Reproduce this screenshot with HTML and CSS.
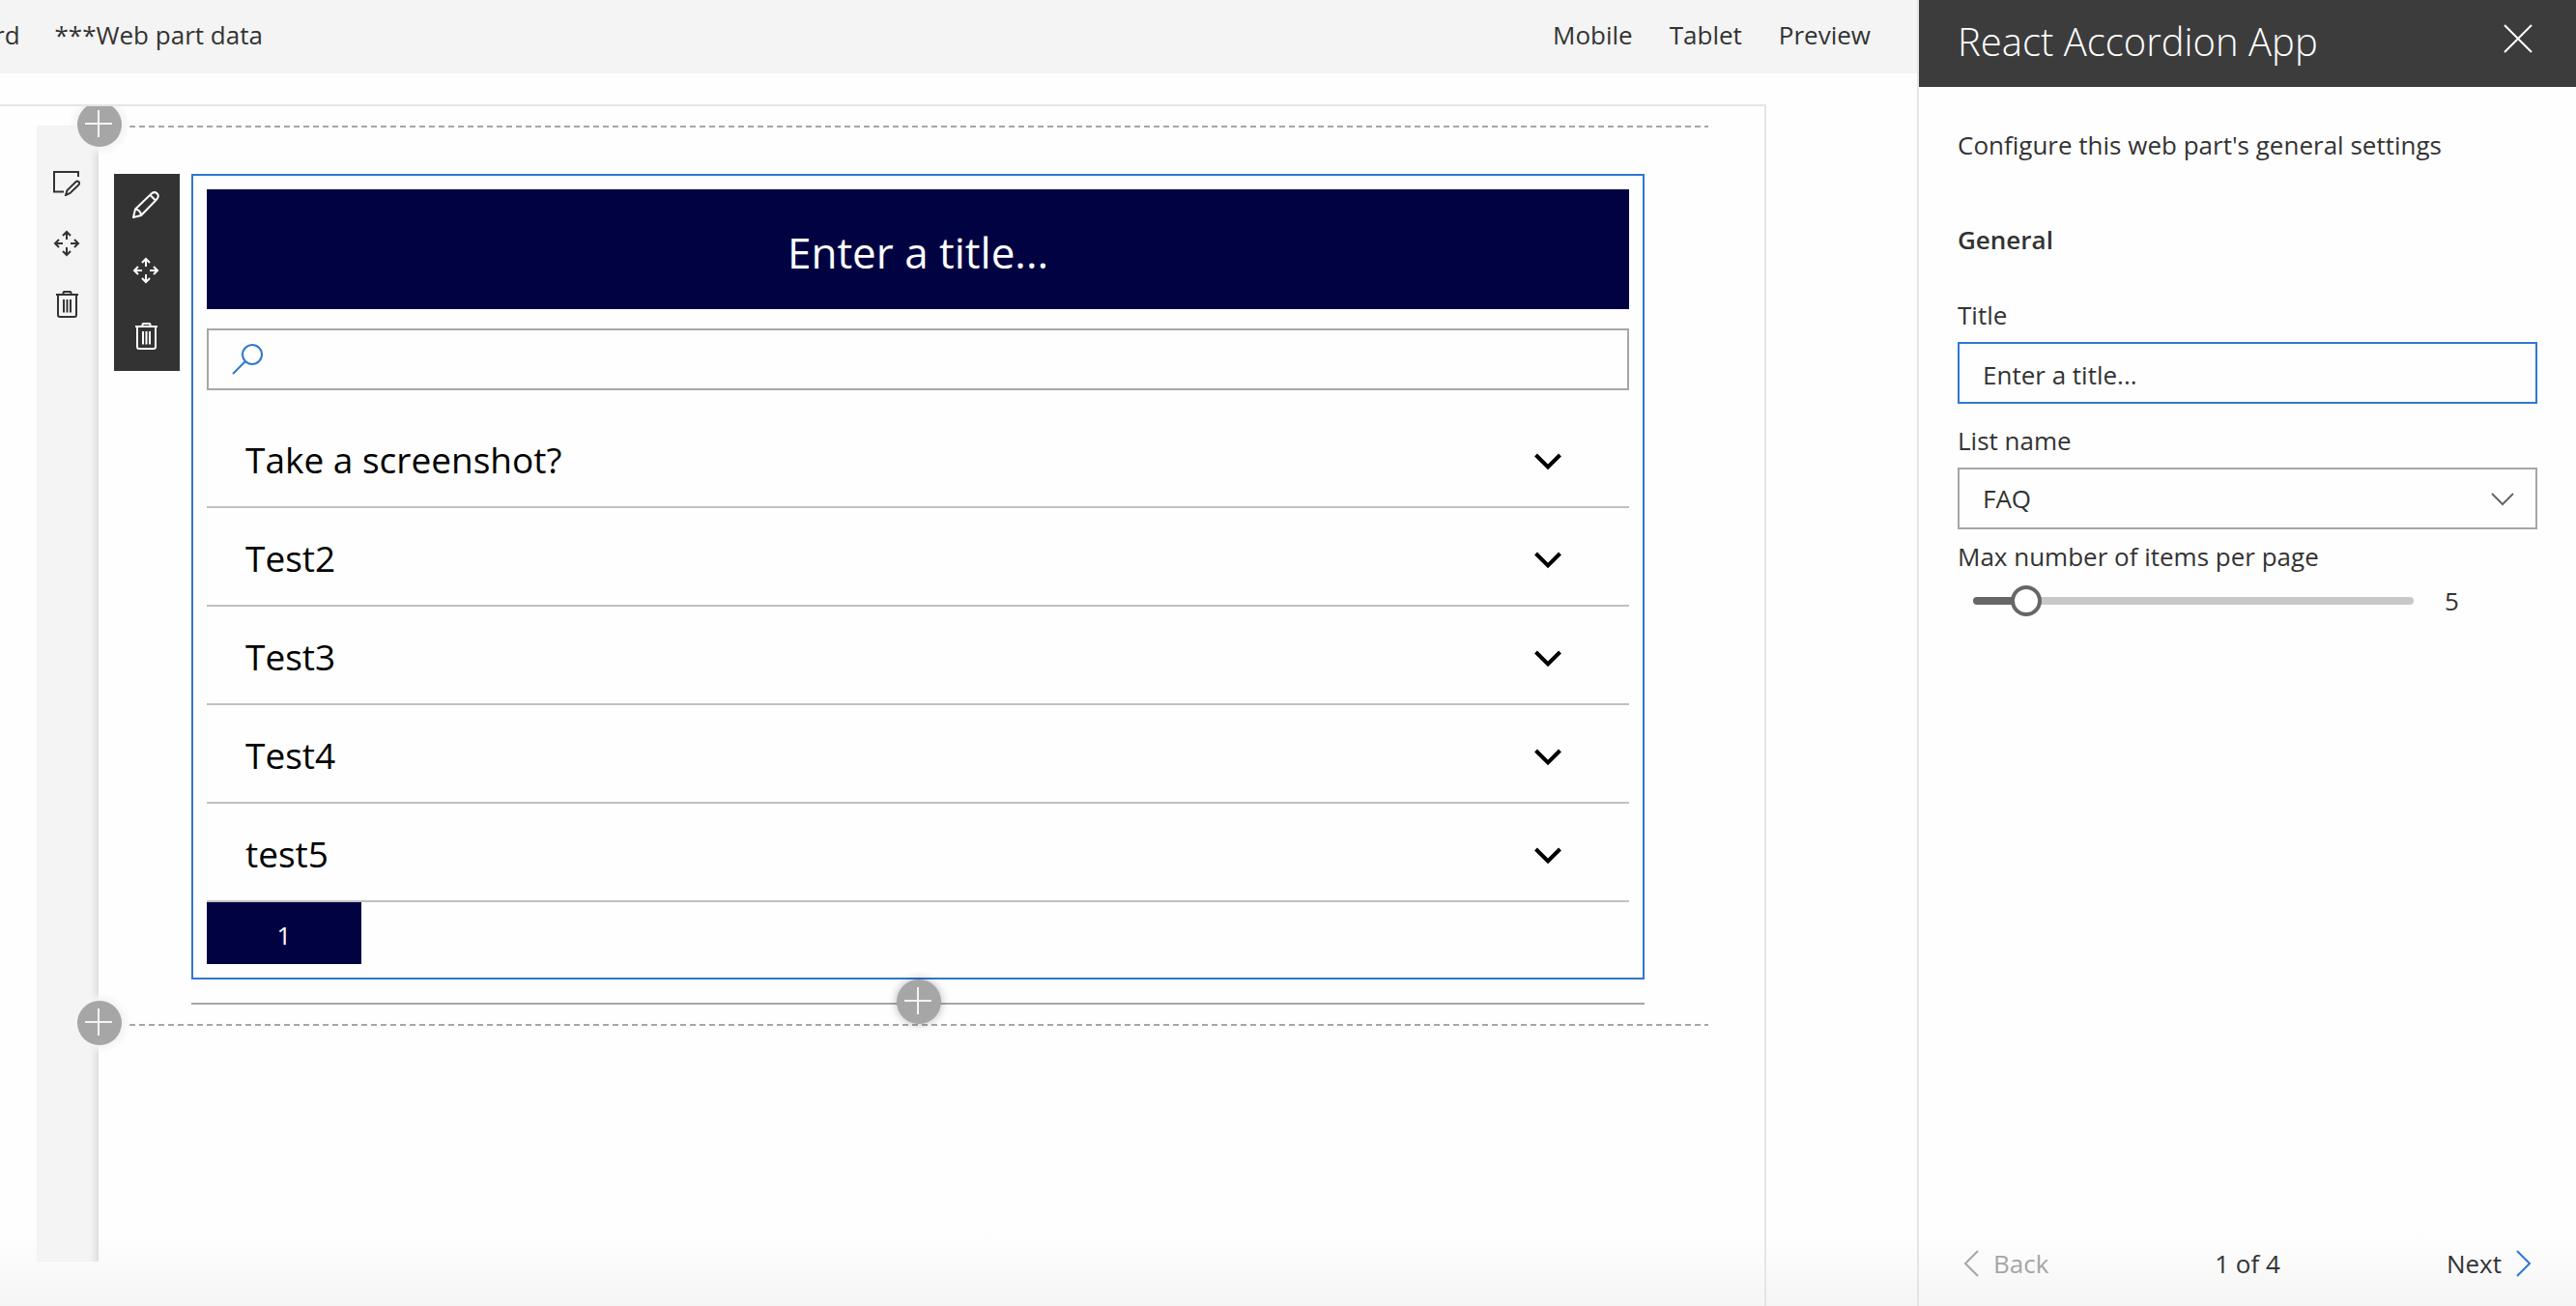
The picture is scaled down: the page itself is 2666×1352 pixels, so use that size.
FILE: index.html
```html
<!DOCTYPE html>
<html lang="en">
<head>
<meta charset="utf-8">
<title>React Accordion App</title>
<link rel="stylesheet" href="styles.css">
</head>
<body>
<svg class="defs" aria-hidden="true">
  <symbol id="i-move" viewBox="0 0 28 28">
    <path d="M14 2v8M14 18v8M2 14h8M18 14h8M10 6l4-4 4 4M10 22l4 4 4-4M6 10l-4 4 4 4M22 10l4 4-4 4"/>
  </symbol>
  <symbol id="i-trash" viewBox="0 0 28 28">
    <path d="M3 4h23M5 4v21q0 2 2 2h15q2 0 2-2V4M10.500 4V2q0-1 1-1h6q1 0 1 1v2M11 9v13.500M14.500 9v13.500M18 9v13.500"/>
  </symbol>
  <symbol id="i-down" viewBox="0 0 28 18">
    <path d="M1.500 2L14 14.500L26.500 2"/>
  </symbol>
</svg>
<div class="page">
  <main class="workspace">
    <header class="topbar">
      <nav class="links">
        <a href="#">rd</a>
        <a href="#">***Web part data</a>
      </nav>
      <nav class="links views">
        <a href="#">Mobile</a>
        <a href="#">Tablet</a>
        <a href="#">Preview</a>
      </nav>
    </header>
    <div class="canvas">
      <div class="section-tools">
        <button type="button" aria-label="Edit section"><svg class="icon" viewBox="0 0 28 28"><path d="M11 23.500H1V3H26V8M13 27l1.500-5L23.500 13.200q1.500-1.200 3 0t0 3L17.500 25z"/></svg></button>
        <button type="button" aria-label="Move section"><svg class="icon"><use href="#i-move"/></svg></button>
        <button type="button" aria-label="Delete section"><svg class="icon"><use href="#i-trash"/></svg></button>
      </div>
      <div class="section">
        <button type="button" class="add add-top" aria-label="Add section above"></button>
        <button type="button" class="add add-bottom" aria-label="Add section below"></button>
        <div class="part-row">
          <div class="part-tools">
            <button type="button" aria-label="Edit web part"><svg class="icon" viewBox="0 0 28 28"><path d="M1 27l2-8.500L20 2.300q3-2.300 5.500 0t0 5.700L9 25zM18.500 4l5.500 5.500M3 18.500q5 .5 6 6"/></svg></button>
            <button type="button" aria-label="Move web part"><svg class="icon"><use href="#i-move"/></svg></button>
            <button type="button" aria-label="Delete web part"><svg class="icon"><use href="#i-trash"/></svg></button>
          </div>
          <div class="part">
            <h1 class="part-title">Enter a title...</h1>
            <label class="search">
              <svg viewBox="0 0 32 32" aria-hidden="true"><circle cx="21" cy="11" r="10"/><path d="M14 18L1 31"/></svg>
              <input type="search" aria-label="Search">
            </label>
            <div class="accordion">
              <button type="button"><span>Take a screenshot?</span><svg><use href="#i-down"/></svg></button>
              <button type="button"><span>Test2</span><svg><use href="#i-down"/></svg></button>
              <button type="button"><span>Test3</span><svg><use href="#i-down"/></svg></button>
              <button type="button"><span>Test4</span><svg><use href="#i-down"/></svg></button>
              <button type="button"><span>test5</span><svg><use href="#i-down"/></svg></button>
            </div>
            <button type="button" class="pager">1</button>
          </div>
        </div>
        <div class="insert"><button type="button" class="add add-part" aria-label="Add web part"></button></div>
      </div>
    </div>
  </main>
  <aside class="panel">
    <header class="panel-head">
      <h2>React Accordion App</h2>
      <button type="button" aria-label="Close"><svg viewBox="0 0 30 30"><path d="M1 1L29 29M29 1L1 29"/></svg></button>
    </header>
    <form class="panel-body">
      <p>Configure this web part's general settings</p>
      <h3>General</h3>
      <label for="title">Title</label>
      <input id="title" class="box box-active" type="text" value="Enter a title...">
      <label for="list" class="next-field">List name</label>
      <div class="select">
        <select id="list" class="box"><option>FAQ</option></select>
        <svg viewBox="0 0 24 14" aria-hidden="true"><path d="M1 1L12 12L23 1"/></svg>
      </div>
      <label for="max" class="max-label">Max number of items per page</label>
      <div class="slider">
        <input id="max" type="range" min="1" max="45" value="5">
        <output for="max">5</output>
      </div>
    </form>
    <footer class="panel-foot">
      <button type="button" class="back" disabled><svg viewBox="0 0 16 28"><path d="M15 1L2 14L15 27"/></svg>Back</button>
      <span>1 of 4</span>
      <button type="button" class="next">Next<svg viewBox="0 0 16 28"><path d="M1 1L14 14L1 27"/></svg></button>
    </footer>
  </aside>
</div>
</body>
</html>
```

FILE: styles.css
```css
* { box-sizing: border-box; }

body {
  margin: 0;
  background: linear-gradient(to top, #f5f5f5, #fefefe 76px) #fefefe;
  color: #333;
  font: 26px/36px "Open Sans", "Noto Sans", sans-serif;
}

button, input, select { font: inherit; color: inherit; }

button {
  padding: 0;
  border: 0;
  background: none;
}

h1, h2, h3, p { margin: 0; }
svg { fill: none; stroke: currentColor; stroke-width: 2; display: block; }
.defs { width: 0; height: 0; position: absolute; }

.page { display: flex; min-height: 100vh; }

.workspace {
  flex: 1;
  min-width: 0;
  display: flex;
  flex-direction: column;
}

/* Top command bar */
.topbar {
  display: flex;
  justify-content: space-between;
  height: 76px;
  padding: 18px 48px 0 0;
  background: #f4f4f4;
  overflow: hidden;
}
.links { display: flex; gap: 36px; margin-left: -6px; }
.links a { color: inherit; text-decoration: none; white-space: nowrap; }
.views { gap: 38px; }

/* Editing canvas */
.canvas {
  flex: 1;
  display: flex;
  margin: 32px 156px 0 0;
  padding: 20px 58px 46px 38px;
  border: solid #e5e5e5;
  border-width: 2px 2px 0 0;
  overflow: hidden;
}

.section-tools {
  flex: none;
  width: 64px;
  padding-top: 27px;
  background: #f4f4f4;
  box-shadow: inset -8px 0 8px -6px #d4d4d4;
}
.section-tools button {
  display: grid;
  place-items: center;
  width: 62px;
  height: 63px;
}

.icon { width: 28px; height: 28px; }

.section {
  flex: 1;
  align-self: flex-start;
  position: relative;
  height: 932px;
  padding: 50px 66px 0 16px;
}
.section::before, .section::after {
  content: "";
  position: absolute;
  left: 32px;
  right: 0;
  height: 2px;
  background: repeating-linear-gradient(to right, #a6a6a6 0 6px, transparent 6px 10px);
}
.section::before { top: 0; }
.section::after { bottom: 0; }

.add {
  position: absolute;
  z-index: 1;
  width: 46px;
  height: 46px;
  border-radius: 50%;
  background:
    linear-gradient(#f4f4f4, #f4f4f4) 21px 8px / 2px 28px no-repeat,
    linear-gradient(#f4f4f4, #f4f4f4) 8px 21px / 28px 2px no-repeat,
    #a6a6a6;
  box-shadow: 0 0 6px 5px #f4f4f4;
}
.add-top { left: -22px; top: -24px; }
.add-bottom { left: -22px; bottom: -20px; }

.part-row { display: flex; align-items: flex-start; gap: 12px; }

.part-tools { flex: none; width: 68px; background: #333; color: #fff; }
.part-tools button {
  display: grid;
  place-items: center;
  width: 100%;
  height: 68px;
  padding: 0 2px 4px 0;
}

/* Accordion web part */
.part {
  flex: 1;
  padding: 14px;
  border: 2px solid #2f78cf;
}
.part-title {
  height: 124px;
  background: #000242;
  color: #fff;
  font-size: 44px;
  font-weight: 400;
  line-height: 130px;
  text-align: center;
}
.search {
  display: flex;
  align-items: center;
  gap: 16px;
  height: 64px;
  margin: 20px 0;
  padding: 0 24px;
  border: 2px solid #a6a6a6;
}
.search svg { width: 32px; height: 32px; color: #2f78cf; }
.search input {
  flex: 1;
  border: 0;
  background: none;
  outline: 0;
}
.accordion button {
  display: flex;
  align-items: center;
  justify-content: space-between;
  width: 100%;
  height: 102px;
  padding: 4px 70px 0 40px;
  border-bottom: 2px solid #c0c0c0;
  color: #000;
  font-size: 37px;
}
.accordion svg { width: 28px; height: 18px; margin-top: 4px; stroke-width: 4; }
.pager {
  display: block;
  width: 160px;
  height: 64px;
  padding-top: 3px;
  background: #000242;
  color: #fff;
}

.insert {
  position: relative;
  height: 2px;
  margin: 24px 0 0 80px;
  background: #a6a6a6;
}
.add-part {
  top: -24px;
  left: calc(50% - 22px);
  box-shadow: 0 0 10px rgba(0, 0, 0, .3);
}

/* Property pane */
.panel {
  flex: none;
  display: flex;
  flex-direction: column;
  width: 682px;
  border-left: 2px solid #e5e5e5;
}
.panel-head {
  display: flex;
  justify-content: space-between;
  align-items: center;
  height: 90px;
  padding: 0 45px 4px 40px;
  background: #3c3c3c;
  color: #fff;
}
.panel-head h2 { font-size: 40px; font-weight: 300; }
.panel-head button { padding-bottom: 6px; }
.panel-head svg { width: 30px; height: 30px; }

.panel-body {
  flex: 1;
  display: flex;
  flex-direction: column;
  padding: 42px 40px 0;
}
.panel-body h3 { margin: 62px 0 42px; font-size: 26px; font-weight: 600; }
.box {
  display: block;
  width: 100%;
  height: 64px;
  margin-top: 10px;
  padding: 0 24px;
  border: 2px solid #a6a6a6;
  border-radius: 0;
  background: none;
  outline: 0;
  appearance: none;
}
.box-active { padding-top: 4px; border-color: #2f78cf; }
.next-field { margin-top: 20px; }
.max-label { margin-top: 10px; }
.select { position: relative; }
.select svg {
  position: absolute;
  right: 24px;
  top: 36px;
  width: 24px;
  height: 14px;
  color: #666;
  pointer-events: none;
}
.slider {
  display: flex;
  align-items: center;
  gap: 32px;
  margin-top: 10px;
  padding: 0 80px 0 16px;
}
.slider output { width: 16px; }
.slider input {
  flex: 1;
  min-width: 0;
  height: 8px;
  margin: 0;
  border-radius: 4px;
  background: linear-gradient(to right, #666 12%, #c8c8c8 12%);
  appearance: none;
}
.slider input::-webkit-slider-thumb {
  width: 32px;
  height: 32px;
  border: 4px solid #666;
  border-radius: 50%;
  background: #fff;
  appearance: none;
}

.panel-foot {
  display: grid;
  grid-template-columns: 1fr auto 1fr;
  padding: 0 46px 26px;
}
.panel-foot button { display: flex; align-items: center; gap: 15px; }
.panel-foot svg { width: 16px; height: 28px; }
.back { color: #a6a6a6; }
.next { justify-self: end; }
.next svg { color: #2f78cf; }
```
